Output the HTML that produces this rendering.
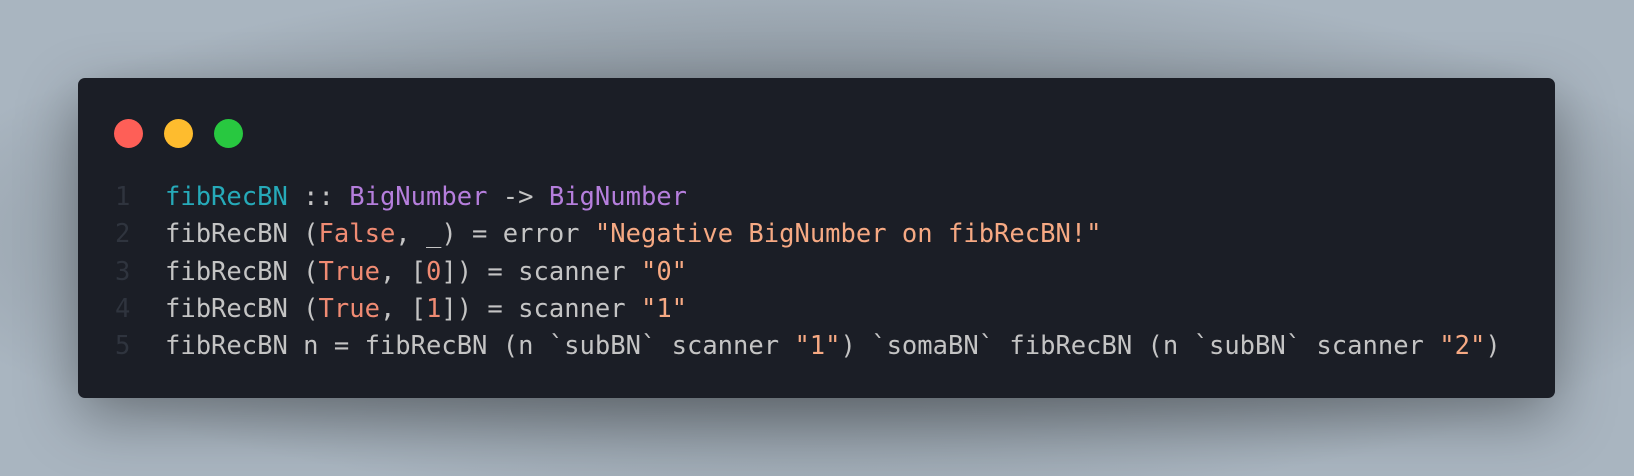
<!DOCTYPE html>
<html><head><meta charset="utf-8"><style>
html,body{margin:0;padding:0}
body{width:1634px;height:476px;overflow:hidden;background:radial-gradient(ellipse at 50% 50%,#6f7780 0%,#8a949d 45%,#a9b5c0 80%);position:relative}
.win{position:absolute;left:78px;top:78px;width:1477px;height:320px;background:#1b1e26;border-radius:7px;box-shadow:0 20px 60px rgba(0,0,0,.35)}
.dot{position:absolute;top:119px;width:29px;height:29px;border-radius:50%}
pre{position:absolute;left:0;top:179px;margin:0;font-family:"DejaVu Sans Mono",monospace;font-size:25.5px;line-height:37.3px;color:#c4c4c4}
.n{display:inline-block;width:165px;text-align:left;padding-left:115px;box-sizing:border-box;color:#2f343e}
.c{color:#26aab9}.p{color:#b57edc}.s{color:#f6a983}.k{color:#f08b73}
</style></head><body>
<div class="win"></div>
<div class="dot" style="left:114px;background:#fe5f57"></div>
<div class="dot" style="left:164px;background:#febc2e"></div>
<div class="dot" style="left:214px;background:#28c840"></div>
<pre><span class="n">1</span><span class="c">fibRecBN</span> :: <span class="p">BigNumber</span> -&gt; <span class="p">BigNumber</span>
<span class="n">2</span>fibRecBN (<span class="k">False</span>, _) = error <span class="s">"Negative BigNumber on fibRecBN!"</span>
<span class="n">3</span>fibRecBN (<span class="k">True</span>, [<span class="k">0</span>]) = scanner <span class="s">"0"</span>
<span class="n">4</span>fibRecBN (<span class="k">True</span>, [<span class="k">1</span>]) = scanner <span class="s">"1"</span>
<span class="n">5</span>fibRecBN n = fibRecBN (n `subBN` scanner <span class="s">"1"</span>) `somaBN` fibRecBN (n `subBN` scanner <span class="s">"2"</span>)</pre>
</body></html>
